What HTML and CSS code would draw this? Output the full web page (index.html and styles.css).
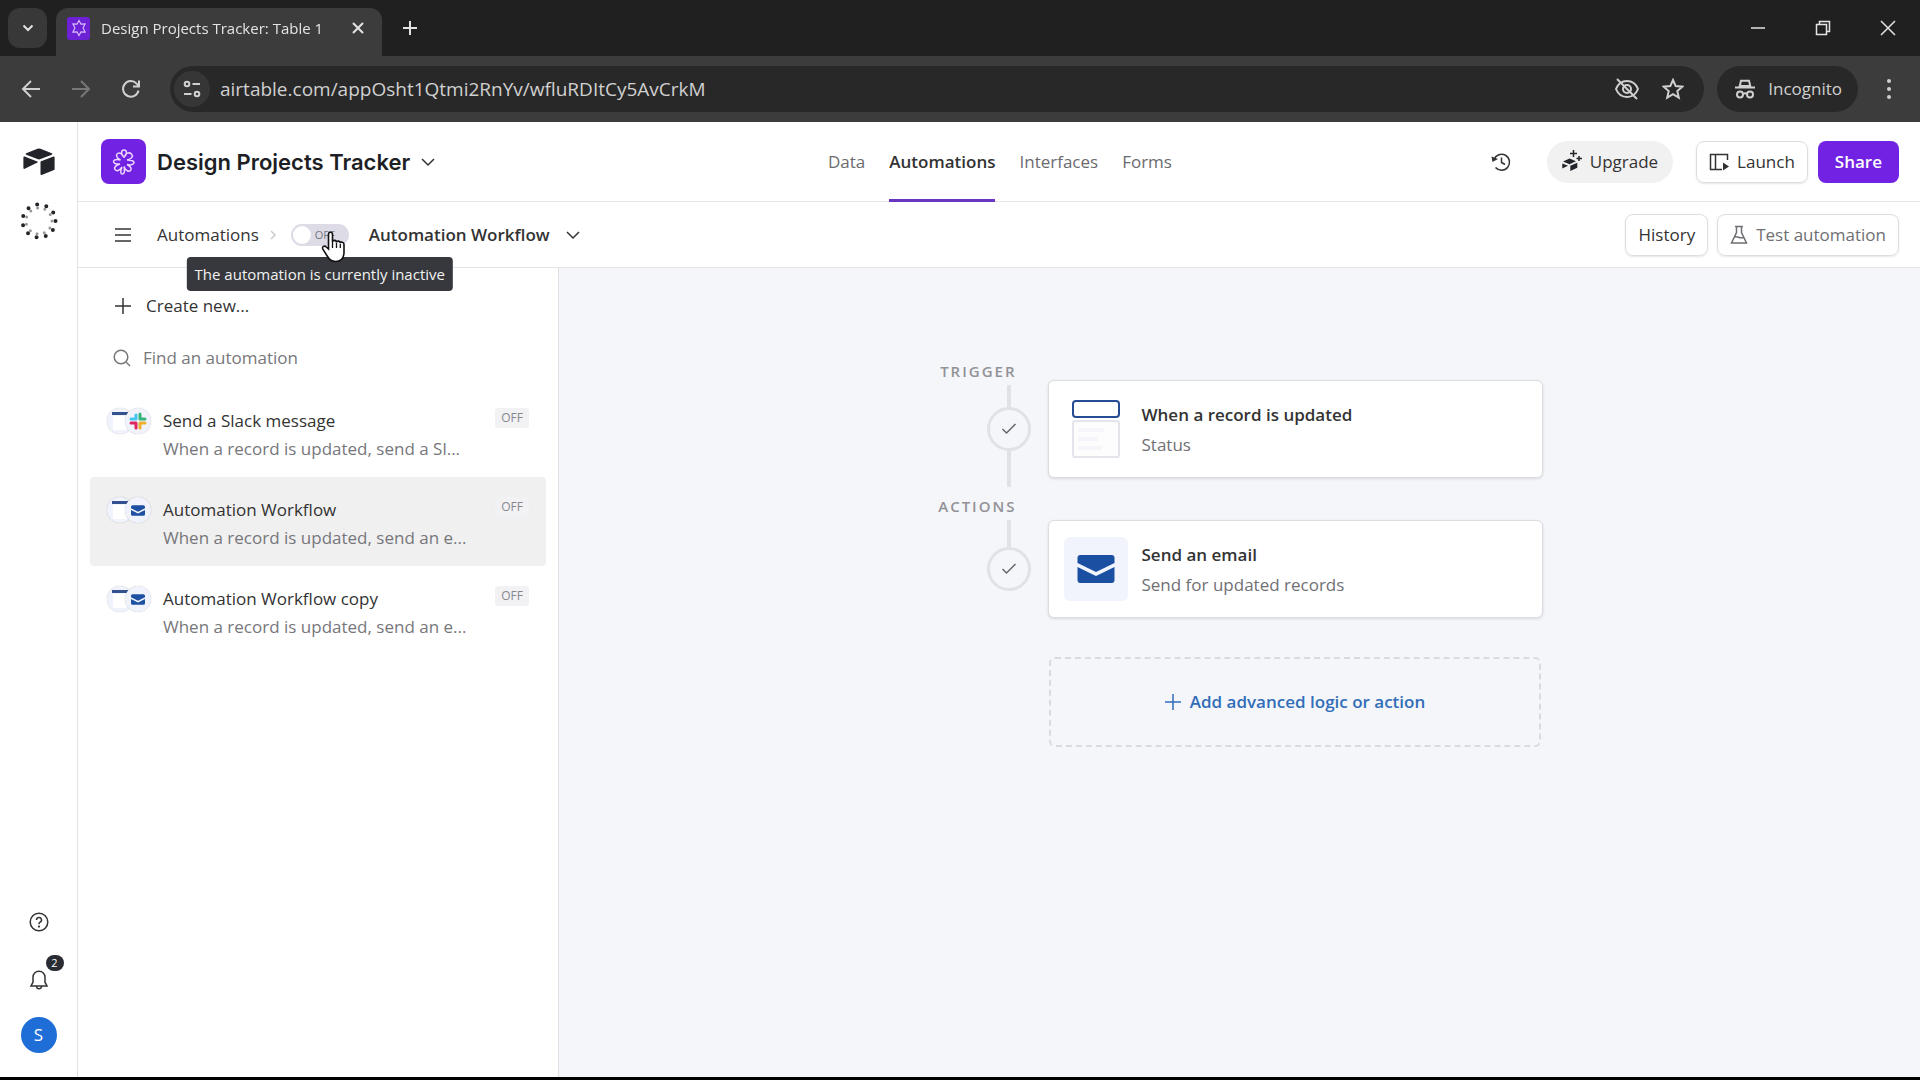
FILE: index.html
```html
<!DOCTYPE html>
<html lang="en">
<head>
    <meta charset="UTF-8">
    <meta name="viewport" content="width=device-width, initial-scale=1.0">
    <title>Design Projects Tracker: Table 1</title>
    <link rel="stylesheet" href="styles.css">
</head>
<body>
    <!-- Browser Tabs -->
    <div class="tab-strip">
        <button class="tab-search" aria-label="Search tabs">
            <svg width="16" height="16" viewBox="0 0 16 16"><path d="M3.5 5.5 8 10l4.500-4.500" class="stroke bold"/></svg>
        </button>
        <div class="tab">
            <span class="tab-icon">
                <svg width="18" height="18" viewBox="0 0 24 24"><path d="M12 2l2.600 4.800 5.600-.3-2.800 5.500 2.800 5.500-5.600-.3L12 22l-2.600-4.800-5.600.3L6.600 12 3.800 6.500l5.600.3z" class="stroke"/></svg>
            </span>
            <span class="tab-title">Design Projects Tracker: Table 1</span>
            <button class="tab-close" aria-label="Close tab">
                <svg width="16" height="16" viewBox="0 0 16 16"><path d="M3 3l10 10M13 3 3 13" class="stroke bold"/></svg>
            </button>
        </div>
        <button class="tab-new" aria-label="New tab">
            <svg width="16" height="16" viewBox="0 0 16 16"><path d="M8 1v14M1 8h14" class="stroke bold"/></svg>
        </button>
        <div class="window-buttons">
            <button aria-label="Minimize"><svg width="16" height="16" viewBox="0 0 16 16"><path d="M1 8h14" class="stroke"/></svg></button>
            <button aria-label="Restore"><svg width="16" height="16" viewBox="0 0 16 16"><path d="M1.500 4.500h10v10h-10zM4.500 4.500v-3h10v10h-3" class="stroke"/></svg></button>
            <button aria-label="Close"><svg width="16" height="16" viewBox="0 0 16 16"><path d="M1 1l14 14M15 1 1 15" class="stroke"/></svg></button>
        </div>
    </div>

    <!-- Browser Toolbar -->
    <div class="toolbar">
        <button class="tool" aria-label="Back"><svg width="20" height="20" viewBox="0 0 20 20"><path d="M19 10H2.500M10 2 2 10l8 8" class="stroke bold"/></svg></button>
        <button class="tool dim" aria-label="Forward"><svg width="20" height="20" viewBox="0 0 20 20"><path d="M1 10h16.500M10 2l8 8-8 8" class="stroke bold"/></svg></button>
        <button class="tool" aria-label="Reload"><svg width="20" height="20" viewBox="0 0 20 20"><path d="M17.500 11.500A7.800 7.800 0 1 1 15.600 4.600L18 7M18 1.500V7.500H12" class="stroke bold"/></svg></button>
        <div class="address-bar">
            <button class="site-info" aria-label="Site information">
                <svg width="18" height="18" viewBox="0 0 18 18"><circle cx="4" cy="4" r="2.300" class="stroke bold"/><path d="M9.500 4H17M1 14h7.500" class="stroke bold"/><circle cx="14" cy="14" r="2.300" class="stroke bold"/></svg>
            </button>
            <input class="url" type="text" aria-label="Address" value="airtable.com/appOsht1Qtmi2RnYv/wfluRDItCy5AvCrkM">
            <button aria-label="Tracking protection"><svg width="26" height="22" viewBox="0 0 26 22"><path d="M2 11c2-5 6-8 11-8s9 3 11 8c-2 5-6 8-11 8S4 16 2 11z" class="stroke bold"/><circle cx="13" cy="11" r="4" class="stroke bold"/><path d="M3 1l20 20" class="stroke bold"/></svg></button>
            <button aria-label="Bookmark"><svg width="22" height="22" viewBox="0 0 22 22"><path d="M11 2l2.700 6.100 6.600.6-5 4.400 1.500 6.500L11 16.200l-5.800 3.400 1.500-6.500-5-4.400 6.600-.6z" class="stroke bold"/></svg></button>
        </div>
        <button class="incognito">
            <svg width="20" height="20" viewBox="0 0 20 20"><path d="M0 8.500h20M4.500 8 6 1.800h8L15.500 8" class="stroke bold"/><path d="M5 6h10v2H5z" fill="currentColor"/><circle cx="5" cy="15.500" r="3" class="stroke bold"/><circle cx="15" cy="15.500" r="3" class="stroke bold"/><path d="M8 15q2-1.500 4 0" class="stroke bold"/></svg>
            Incognito
        </button>
        <button class="tool menu" aria-label="Menu"><svg width="6" height="22" viewBox="0 0 6 22" fill="currentColor"><circle cx="3" cy="3" r="2"/><circle cx="3" cy="11" r="2"/><circle cx="3" cy="19" r="2"/></svg></button>
    </div>

    <div class="app">
        <!-- Left Rail -->
        <aside class="rail">
            <a href="#" class="rail-logo" aria-label="Home">
                <svg width="32" height="28" viewBox="0 0 32 28" fill="#222429"><path d="M14.500.8 3.200 5.300c-.7.3-.7 1.100 0 1.400l11.200 4.400c1 .4 2.200.4 3.200 0l11.200-4.400c.7-.3.7-1.100 0-1.400L17.500.8a4 4 0 0 0-3 0z"/><path d="M17.500 14v12.200c0 .6.6 1 1.100.8L31 22c.4-.1.600-.5.600-.8V9.300c0-.6-.6-1-1.100-.8L18.100 13.200c-.4.100-.6.500-.6.800z"/><path d="M14.500 14.500 1.700 20.800c-.6.300-1.300-.1-1.300-.8V9.400c0-.8.500-1 1.200-.8l12.700 5c.5.200.6.600.2.900z"/></svg>
            </a>
            <svg class="rail-loader" width="38" height="38" viewBox="0 0 38 38"><circle cx="19" cy="19" r="16.500" fill="none" stroke="#222429" stroke-width="4" stroke-linecap="round" stroke-dasharray="0 9.420"/><circle cx="19" cy="19" r="13" fill="none" stroke="#999" stroke-width="3" stroke-linecap="round" stroke-dasharray="0 7.430"/></svg>
            <div class="rail-bottom">
                <button aria-label="Help"><svg width="20" height="20" viewBox="0 0 20 20"><circle cx="10" cy="10" r="8.800" class="stroke"/><path d="M7.500 8a2.500 2.500 0 1 1 3.600 2.200c-.8.400-1.100.8-1.100 1.600v.4" class="stroke"/><circle cx="10" cy="14.600" r="1.100" fill="currentColor"/></svg></button>
                <button class="bell" aria-label="Notifications">
                    <svg width="20" height="20" viewBox="0 0 20 20"><path d="M10 1.200c-3.600 0-6 2.600-6 6v5L2 16h16l-2-3.800v-5c0-3.400-2.400-6-6-6zM7.500 16.500c.3 2.900 4.700 2.900 5 0" class="stroke"/></svg>
                    <span class="count">2</span>
                </button>
                <button class="avatar" aria-label="Account">S</button>
            </div>
        </aside>

        <div class="main">
            <!-- Base Header -->
            <header class="header">
                <div class="base">
                    <span class="base-icon">
                        <svg width="24" height="28" viewBox="0 0 24 28"><path d="M12 9.500C8.500 6 9 2 12 2s3.500 4 0 7.500c1.500-5 5.500-5.500 7.500-3.500s.5 5-4.500 6c5 0 7 1.500 7 2.500s-2 3.500-7 2c4 2 5 4.500 3.500 6s-5 .5-6.500-4c1 4 .5 7.500-1.500 7.500S8 24 10 19c-2.500 4-5.500 4.500-7 2.500s1-4.500 5-5.500c-4.500.5-6.500-1-6.500-2.500S4 11 8.500 12C4.500 10 3.500 7 5.500 5.500S10 5.500 12 9.500z" class="stroke"/></svg>
                    </span>
                    <h1>Design Projects Tracker</h1>
                    <svg width="14" height="14" viewBox="0 0 14 14"><path d="M1 4l6 6 6-6" class="stroke"/></svg>
                </div>
                <nav class="nav-links">
                    <a href="#">Data</a>
                    <a href="#" class="active">Automations</a>
                    <a href="#">Interfaces</a>
                    <a href="#">Forms</a>
                </nav>
                <div class="header-actions">
                    <button class="history-icon" aria-label="Base history"><svg width="20" height="20" viewBox="0 0 20 20"><path d="M3 7.500A8 8 0 1 1 4.500 15.500M10.500 5.500V10.500L14 12.500" class="stroke"/><path d="M.5 4.500 7 7 1.500 10z" fill="currentColor"/></svg></button>
                    <button class="btn upgrade">
                        <svg width="20" height="26" viewBox="0 0 20 26" fill="#222429"><path d="M1 12.500 7.500 9.500l6.500 2.800-6.500 3zM.3 14.500 6 16.800.3 19.500zM8.300 16.800l7-3v5l-7 3.200z"/><path d="M11.500 1v7M8 4.500h7M17 7v5M14.500 9.500h5.500" stroke="#222429" stroke-width="1.500"/></svg>
                        Upgrade
                    </button>
                    <button class="btn outlined">
                        <svg width="20" height="18" viewBox="0 0 20 18"><path d="M10 16.500H1.500v-15h17V7M6.500 1.500v15M10 16.500h3" class="stroke"/><path d="M14 9.500v8l6-4z" fill="currentColor"/></svg>
                        Launch
                    </button>
                    <button class="btn share">Share</button>
                </div>
            </header>

            <!-- Automation Bar -->
            <div class="subheader">
                <button class="list-toggle" aria-label="Toggle list"><svg width="18" height="16" viewBox="0 0 18 16"><path d="M1 2h16M1 8h16M1 14h16" class="stroke bold"/></svg></button>
                <a href="#" class="crumb">Automations</a>
                <svg class="crumb-arrow" width="8" height="12" viewBox="0 0 8 12"><path d="M2 2l4 4-4 4" class="stroke"/></svg>
                <label class="switch">
                    <input type="checkbox" aria-label="Automation active">
                    <span>OFF</span>
                    <svg class="cursor" width="26" height="32" viewBox="0 0 26 32"><path d="M7.500 18V3.500c0-3 4-3 4 0V11c.3-2.300 4-2.200 4 .5.300-2 3.800-1.800 3.800.7.300-1.700 3.700-1.500 3.700 1.300V21c0 6-3 9.500-8.500 9.500-4 0-6-1.500-8-5l-4.600-7.300c-1.300-2.500 1.600-4.200 3.400-2.200z" fill="#fff" stroke="#111" stroke-width="1.600"/><path d="M11.500 11v6M15.500 12v5M19.300 13v4" stroke="#111" stroke-width="1.300"/></svg>
                    <span class="tooltip" role="tooltip">The automation is currently inactive</span>
                </label>
                <h2>Automation Workflow</h2>
                <svg width="14" height="14" viewBox="0 0 14 14"><path d="M1 4l6 6 6-6" class="stroke"/></svg>
                <div class="subheader-actions">
                    <button class="btn outlined">History</button>
                    <button class="btn outlined muted">
                        <svg width="18" height="20" viewBox="0 0 18 20"><path d="M5 1.500h8M6.500 1.500v6L1.500 18h15l-5-10.500v-6M4.500 12c3-1.500 5 2 9 .5" class="stroke"/></svg>
                        Test automation
                    </button>
                </div>
            </div>

            <div class="content">
                <!-- Automation List -->
                <section class="sidebar">
                    <button class="create">
                        <svg width="18" height="18" viewBox="0 0 18 18"><path d="M9 1v16M1 9h16" class="stroke"/></svg>
                        Create new...
                    </button>
                    <label class="search">
                        <svg width="18" height="18" viewBox="0 0 18 18"><circle cx="8" cy="8" r="6.800" class="stroke"/><path d="M13 13l4 4" class="stroke"/></svg>
                        <input type="text" aria-label="Find an automation" placeholder="Find an automation">
                    </label>
                    <ul class="automation-list">
                        <li>
                            <button class="automation">
                                <span class="thumbs">
                                    <span class="thumb"><svg width="16" height="20" viewBox="0 0 16 20"><path d="M0 1h16v3H0z" fill="#33508f"/><path d="M1 5h14v14H1z" fill="#fff"/></svg></span>
                                    <span class="thumb"><svg width="18" height="18" viewBox="0 0 18 18" stroke-width="3" stroke-linecap="round"><path d="M7 3v4M2 7h5" stroke="#45c4ee"/><path d="M11 2v5M11 7h5" stroke="#35b57c"/><path d="M11 11h5M11 11v5" stroke="#ecb22e"/><path d="M2 11h5M7 11v5" stroke="#df2560"/></svg></span>
                                </span>
                                <span class="automation-text">
                                    <span class="automation-name">Send a Slack message</span>
                                    <span class="automation-desc">When a record is updated, send a Sl...</span>
                                </span>
                                <span class="badge">OFF</span>
                            </button>
                        </li>
                        <li>
                            <button class="automation selected">
                                <span class="thumbs">
                                    <span class="thumb"><svg width="16" height="20" viewBox="0 0 16 20"><path d="M0 1h16v3H0z" fill="#33508f"/><path d="M1 5h14v14H1z" fill="#fff"/></svg></span>
                                    <span class="thumb"><svg width="14" height="11" viewBox="0 0 37 28" fill="#1d50a2"><path d="M4 0h29a4 4 0 0 1 4 4v4L18.500 17 0 8V4a4 4 0 0 1 4-4z"/><path d="M0 13l18.500 9L37 13v11a4 4 0 0 1-4 4H4a4 4 0 0 1-4-4z"/></svg></span>
                                </span>
                                <span class="automation-text">
                                    <span class="automation-name">Automation Workflow</span>
                                    <span class="automation-desc">When a record is updated, send an e...</span>
                                </span>
                                <span class="badge">OFF</span>
                            </button>
                        </li>
                        <li>
                            <button class="automation">
                                <span class="thumbs">
                                    <span class="thumb"><svg width="16" height="20" viewBox="0 0 16 20"><path d="M0 1h16v3H0z" fill="#33508f"/><path d="M1 5h14v14H1z" fill="#fff"/></svg></span>
                                    <span class="thumb"><svg width="14" height="11" viewBox="0 0 37 28" fill="#1d50a2"><path d="M4 0h29a4 4 0 0 1 4 4v4L18.500 17 0 8V4a4 4 0 0 1 4-4z"/><path d="M0 13l18.500 9L37 13v11a4 4 0 0 1-4 4H4a4 4 0 0 1-4-4z"/></svg></span>
                                </span>
                                <span class="automation-text">
                                    <span class="automation-name">Automation Workflow copy</span>
                                    <span class="automation-desc">When a record is updated, send an e...</span>
                                </span>
                                <span class="badge">OFF</span>
                            </button>
                        </li>
                    </ul>
                </section>

                <!-- Workflow Canvas -->
                <main class="canvas">
                    <div class="step trigger">
                        <div class="track">
                            <span class="step-label">TRIGGER</span>
                            <span class="line"></span>
                            <span class="check"><svg width="16" height="12" viewBox="0 0 16 12"><path d="M1.500 6 5.500 10l9-9" class="stroke"/></svg></span>
                            <span class="line tail"></span>
                        </div>
                        <button class="card">
                            <span class="card-icon plain"><svg width="48" height="58" viewBox="0 0 48 58"><rect x="1" y="1" width="46" height="16" rx="3" fill="#fff" stroke="#254c94" stroke-width="2"/><rect x="1" y="21" width="46" height="36" rx="2" fill="#fdfdfe" stroke="#e4e5ea" stroke-width="2"/><path d="M6 30h26M6 39h20M6 48h24" stroke="#f5f6fa" stroke-width="4"/></svg></span>
                            <span class="card-text">
                                <strong>When a record is updated</strong>
                                <span>Status</span>
                            </span>
                        </button>
                    </div>
                    <div class="step action">
                        <div class="track">
                            <span class="step-label">ACTIONS</span>
                            <span class="line"></span>
                            <span class="check"><svg width="16" height="12" viewBox="0 0 16 12"><path d="M1.500 6 5.500 10l9-9" class="stroke"/></svg></span>
                        </div>
                        <button class="card">
                            <span class="card-icon"><svg width="38" height="28" viewBox="0 0 37 28" fill="#1b4fa2"><path d="M3 0h31a3 3 0 0 1 3 3v5L18.500 17 0 8V3a3 3 0 0 1 3-3z"/><path d="M0 12l18.500 9L37 12v13a3 3 0 0 1-3 3H3a3 3 0 0 1-3-3z"/></svg></span>
                            <span class="card-text">
                                <strong>Send an email</strong>
                                <span>Send for updated records</span>
                            </span>
                        </button>
                    </div>
                    <div class="step">
                        <button class="add-action">
                            <svg width="18" height="18" viewBox="0 0 18 18"><path d="M9 1v16M1 9h16" class="stroke"/></svg>
                            Add advanced logic or action
                        </button>
                    </div>
                </main>
            </div>
        </div>
    </div>
</body>
</html>
```
FILE: styles.css
```css
/* Reset Styles */
* {
    margin: 0;
    padding: 0;
    box-sizing: border-box;
}

body {
    font-family: "Open Sans", "Noto Sans", sans-serif;
    font-size: 17px;
    line-height: 24px;
    color: #333;
    background-color: #fff;
    border-bottom: 3px solid #000;
    display: flex;
    flex-direction: column;
    min-height: 100vh;
}

button,
input {
    font: inherit;
    color: inherit;
    background: none;
    border: none;
    outline: none;
}

button {
    display: flex;
    align-items: center;
    justify-content: center;
    cursor: pointer;
}

a {
    color: inherit;
    text-decoration: none;
}

ul {
    list-style: none;
}

svg {
    flex-shrink: 0;
}

.stroke {
    fill: none;
    stroke: currentColor;
    stroke-width: 1.5;
}

.bold {
    stroke-width: 2;
}

/* Browser Tabs */
.tab-strip {
    display: flex;
    align-items: center;
    height: 56px;
    padding-left: 8px;
    background-color: #202020;
    color: #e3e3e3;
}

.tab-search {
    width: 39px;
    height: 40px;
    border-radius: 12px;
    background-color: #383838;
}

.tab {
    display: flex;
    align-items: center;
    width: 326px;
    height: 48px;
    margin: 8px 0 0 9px;
    padding: 0 12px 8px 11px;
    border-radius: 12px 12px 0 0;
    background-color: #3c3c3c;
}

.tab-icon {
    display: flex;
    align-items: center;
    justify-content: center;
    width: 23px;
    height: 23px;
    margin-right: 11px;
    border-radius: 3px;
    background-color: #6d21d5;
    color: #d9b8ff;
}

.tab-title {
    flex: 1;
    font-size: 15px;
    white-space: nowrap;
    mask-image: linear-gradient(to right, #000 92%, rgba(0, 0, 0, 0.3));
}

.tab-close {
    width: 24px;
    height: 24px;
}

.tab-new {
    width: 40px;
    height: 40px;
    margin-left: 8px;
}

.window-buttons {
    display: flex;
    height: 100%;
    margin-left: auto;
}

.window-buttons button {
    width: 65px;
}

/* Browser Toolbar */
.toolbar {
    display: flex;
    align-items: center;
    height: 66px;
    padding: 0 16px 0 10px;
    background-color: #3c3c3c;
    color: #d0d0d0;
}

.tool {
    width: 42px;
    height: 42px;
    margin-right: 8px;
}

.tool.dim {
    color: #777;
}

.tool.menu {
    width: 30px;
    margin: 0 0 0 16px;
}

.address-bar {
    flex: 1;
    display: flex;
    align-items: center;
    gap: 22px;
    height: 46px;
    margin: 0 13px 0 10px;
    padding: 0 20px 0 4px;
    border-radius: 23px;
    background-color: #282828;
}

.site-info {
    width: 36px;
    height: 36px;
    border-radius: 18px;
    background-color: #363636;
}

.url {
    flex: 1;
    margin-left: -12px;
    font-size: 19px;
}

.incognito {
    gap: 13px;
    height: 46px;
    padding: 0 16px 0 18px;
    border-radius: 23px;
    background-color: #282828;
}

/* App Layout */
.app {
    flex: 1;
    display: flex;
}

.rail {
    display: flex;
    flex-direction: column;
    align-items: center;
    width: 78px;
    padding: 26px 0 24px;
    border-right: 1px solid #e2e2e4;
}

.rail-logo {
    display: flex;
}

.rail-loader {
    margin-top: 26px;
}

.rail-bottom {
    display: flex;
    flex-direction: column;
    align-items: center;
    gap: 38px;
    margin-top: auto;
}

.bell {
    position: relative;
}

.count {
    position: absolute;
    top: -15px;
    left: 17px;
    width: 18px;
    height: 16px;
    border-radius: 8px;
    background-color: #2a2c33;
    color: #fff;
    font-size: 11px;
    line-height: 16px;
}

.avatar {
    width: 36px;
    height: 36px;
    margin-top: -11px;
    border-radius: 50%;
    background-color: #1f6dd6;
    color: #fff;
}

.main {
    flex: 1;
    display: flex;
    flex-direction: column;
}

/* Base Header */
.header {
    display: grid;
    grid-template-columns: 1fr auto 1fr;
    height: 80px;
    padding: 0 21px 0 23px;
    border-bottom: 1px solid #e5e5e5;
}

.base {
    display: flex;
    align-items: center;
    gap: 11px;
}

.base-icon {
    display: flex;
    align-items: center;
    justify-content: center;
    width: 45px;
    height: 45px;
    border-radius: 8px;
    background-color: #7222e2;
    color: #ecd4ff;
}

.base h1 {
    font-family: Inter, sans-serif;
    font-size: 22px;
    font-weight: 600;
    color: #1d1f25;
}

.nav-links {
    display: flex;
    gap: 24px;
    color: #6b6b6f;
    font-weight: 500;
}

.nav-links a {
    display: flex;
    align-items: center;
    margin-bottom: -1px;
    padding-top: 3px;
    border-bottom: 3px solid transparent;
}

.nav-links .active {
    color: #333;
    font-weight: 600;
    border-color: #6a35c0;
}

.header-actions {
    display: flex;
    align-items: center;
    justify-content: flex-end;
}

.btn {
    gap: 8px;
    height: 42px;
    padding: 0 12px;
    border-radius: 8px;
    white-space: nowrap;
}

.outlined {
    border: 1px solid #dedee0;
    box-shadow: 0 1px 2px rgba(0, 0, 0, 0.1);
}

.muted {
    color: #6f6f73;
}

.history-icon {
    margin-right: 36px;
}

.upgrade {
    margin-right: 23px;
    padding: 0 15px;
    border-radius: 21px;
    background-color: #f1f1f2;
}

.share {
    margin-left: 10px;
    padding: 0 17px;
    background-color: #7222e2;
    color: #fff;
    font-weight: 600;
}

/* Automation Bar */
.subheader {
    display: flex;
    align-items: center;
    height: 66px;
    padding: 0 21px 0 36px;
    border-bottom: 1px solid #e5e5e5;
}

.list-toggle {
    margin-right: 25px;
    color: #666;
}

.crumb-arrow {
    margin: 0 14px 0 10px;
    color: #ccc;
}

.switch {
    position: relative;
    display: flex;
    align-items: center;
    width: 58px;
    height: 22px;
    border-radius: 11px;
    background-color: #dcdbe6;
    font-size: 11px;
    color: #77777f;
}

.switch input {
    appearance: none;
    width: 18px;
    height: 18px;
    margin: 0 4px 0 2px;
    border-radius: 50%;
    background-color: #fff;
}

.cursor {
    position: absolute;
    top: 7px;
    left: 30px;
    z-index: 2;
}

.tooltip {
    position: absolute;
    top: 33px;
    left: 50%;
    transform: translateX(-50%);
    padding: 5px 8px;
    border-radius: 4px;
    background-color: #36383d;
    color: #f2f2f2;
    font-size: 15px;
    white-space: nowrap;
    z-index: 1;
}

.subheader h2 {
    margin: 0 16px 0 20px;
    font-size: 17px;
    font-weight: 600;
}

.subheader-actions {
    display: flex;
    gap: 9px;
    margin-left: auto;
}

/* Automation List */
.content {
    flex: 1;
    display: flex;
}

.sidebar {
    width: 481px;
    padding: 24px 12px 0 12px;
    border-right: 1px solid #e2e2e6;
}

.create,
.search {
    display: flex;
    align-items: center;
    gap: 14px;
    height: 28px;
    padding-left: 24px;
}

.search {
    gap: 12px;
    margin-top: 24px;
    padding-left: 23px;
    color: #777;
}

.search input {
    flex: 1;
}

.search input::placeholder {
    color: #77777b;
}

.automation-list {
    margin-top: 16px;
}

.automation {
    align-items: flex-start;
    justify-content: flex-start;
    width: 100%;
    height: 89px;
    padding: 20px 17px 0 17px;
    border-radius: 4px;
    text-align: left;
}

.automation.selected {
    background-color: #f0f0f0;
}

.thumbs {
    display: flex;
    margin-right: 12px;
}

.thumb {
    display: flex;
    align-items: center;
    justify-content: center;
    width: 26px;
    height: 26px;
    border-radius: 50%;
    background-color: #f1f3fc;
    overflow: hidden;
    box-shadow: 0 0 1px rgba(0, 0, 0, 0.3);
}

.thumb + .thumb {
    margin-left: -8px;
}

.automation-text {
    flex: 1;
    display: flex;
    flex-direction: column;
    gap: 4px;
    padding-top: 1px;
}

.automation-desc {
    color: #77777b;
}

.badge {
    padding: 0 6px;
    border-radius: 3px;
    background-color: #f2f2f5;
    color: #88888c;
    font-size: 12px;
    line-height: 20px;
}

/* Workflow Canvas */
.canvas {
    flex: 1;
    display: flex;
    flex-direction: column;
    align-items: center;
    padding-top: 92px;
    background-color: #f5f6fa;
}

.step {
    display: flex;
    justify-content: flex-end;
    gap: 17px;
    width: 606px;
}

.track {
    display: flex;
    flex-direction: column;
    align-items: flex-end;
}

.step-label {
    height: 22px;
    margin: 0 14px 3px 0;
    color: #929297;
    font-size: 15px;
    font-weight: 600;
    line-height: 22px;
    letter-spacing: 2px;
}

.line {
    width: 4px;
    height: 22px;
    margin-right: 20px;
    background-color: #e1e2e6;
}

.line.tail {
    height: 36px;
}

.check {
    display: flex;
    align-items: center;
    justify-content: center;
    width: 44px;
    height: 44px;
    border: 3px solid #e1e2e6;
    border-radius: 50%;
    color: #66666a;
}

.card {
    justify-content: flex-start;
    width: 495px;
    height: 98px;
    margin-top: 20px;
    padding: 0 15px;
    border: 1px solid #dcdde1;
    border-radius: 6px;
    background-color: #fff;
    box-shadow: 0 1px 3px rgba(0, 0, 0, 0.12);
    text-align: left;
}

.action {
    margin-top: 8px;
}

.action .line {
    height: 27px;
}

.action .card {
    margin-top: 25px;
}

.card-icon {
    display: flex;
    align-items: center;
    justify-content: center;
    width: 64px;
    height: 64px;
    margin-right: 14px;
    border-radius: 6px;
    background-color: #f1f4fd;
}

.card-icon.plain {
    background: none;
}

.card-text {
    display: flex;
    flex-direction: column;
    gap: 6px;
    padding-top: 2px;
    color: #707074;
}

.card-text strong {
    color: #333;
    font-weight: 600;
}

.add-action {
    gap: 8px;
    width: 492px;
    height: 90px;
    margin: 39px 2px 0 0;
    border: 2px dashed #dadbe0;
    border-radius: 6px;
    color: #326db8;
    font-weight: 600;
}
```
